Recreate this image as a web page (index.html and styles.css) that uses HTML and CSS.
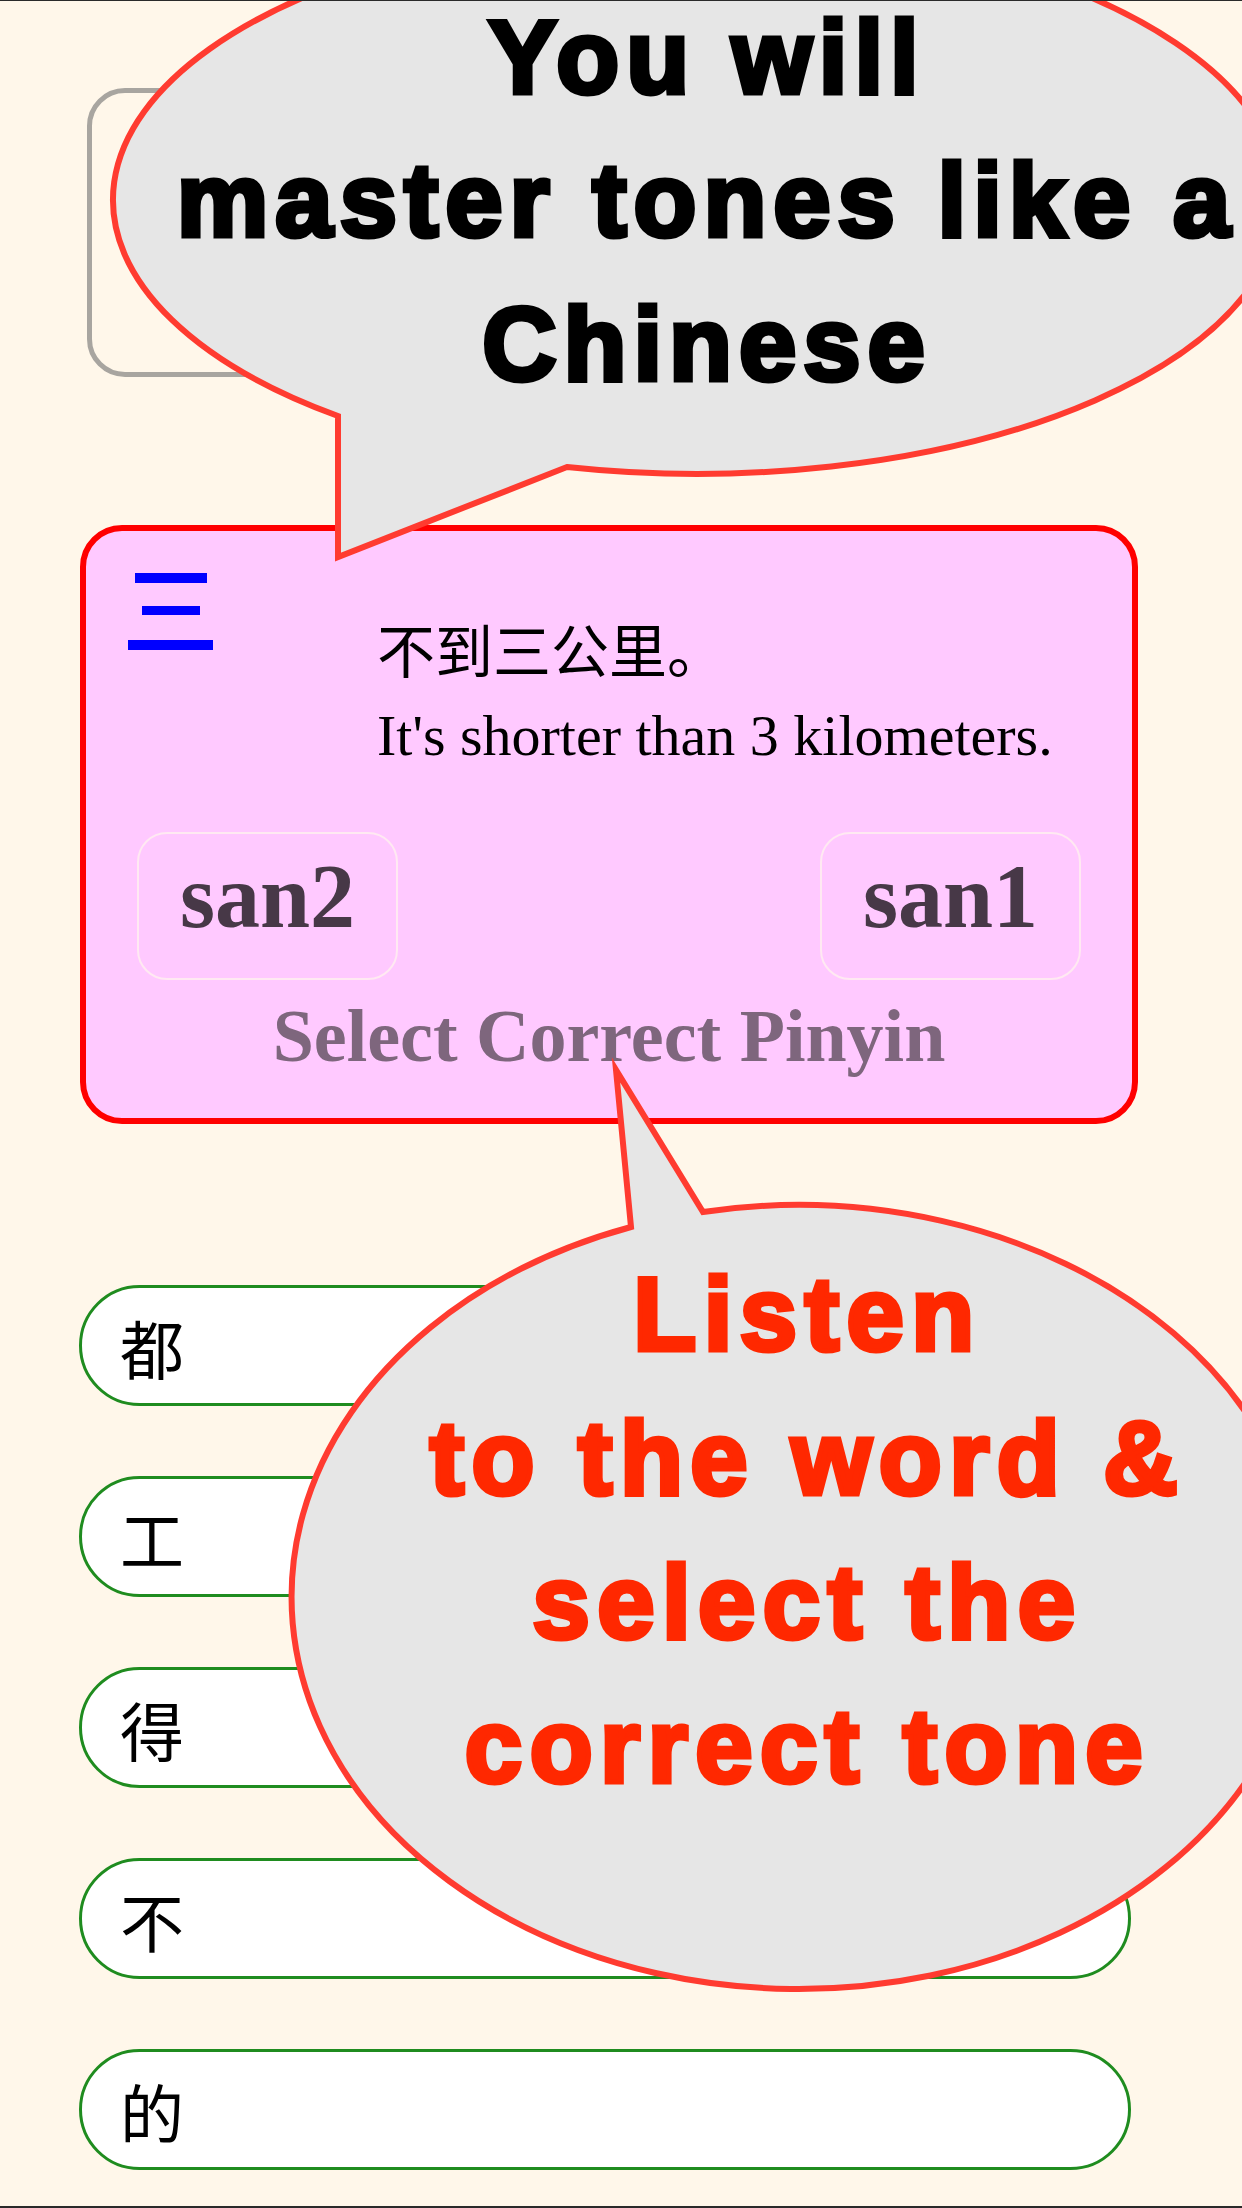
FILE: index.html
```html
<!DOCTYPE html>
<html lang="en">
<head>
<meta charset="utf-8">
<title>Tones</title>
<link rel="stylesheet" href="styles.css">
</head>
<body>
<div class="page">
  <div class="header-box"></div>

  <div class="card">
    <div class="card-top">
      <div class="menu" aria-label="menu"><span class="bar bar1"></span><span class="bar bar2"></span><span class="bar bar3"></span></div>
      <div class="sentence">
        <div class="zh">不到三公里。</div>
        <div class="en">It's shorter than 3 kilometers.</div>
      </div>
    </div>
    <div class="choices">
      <div class="choice">san2</div>
      <div class="choice">san1</div>
    </div>
    <div class="prompt">Select Correct Pinyin</div>
  </div>

  <div class="list">
    <div class="row">都</div>
    <div class="row">工</div>
    <div class="row">得</div>
    <div class="row">不</div>
    <div class="row">的</div>
  </div>

  <svg class="overlay" width="1242" height="2208" viewBox="0 0 1242 2208" aria-hidden="true">
    <path class="bubble b1" d="M 338 416 L 338 557 L 567 467 A 584 274 0 1 0 338 416 Z"/>
    <path class="bubble b2" d="M 631 1227 L 616 1070 L 703 1212 A 507 392 0 1 1 631 1227 Z"/>
  </svg>
  <div class="bubble-text t1">
    <span class="line first">You will</span>
    <span class="line">master tones like a</span>
    <span class="line">Chinese</span>
  </div>
  <div class="bubble-text t2">
    <span class="line">Listen</span>
    <span class="line">to the word &amp;</span>
    <span class="line">select the</span>
    <span class="line">correct tone</span>
  </div>
</div>
</body>
</html>
```

FILE: styles.css
```css
html, body {
  margin: 0;
  padding: 0;
  background: #fff7ea;
}

.page {
  position: relative;
  width: 1242px;
  height: 2208px;
  box-sizing: border-box;
  border-top: 1px solid #2a2a2a;
  border-bottom: 2px solid #2a2a2a;
  background: #fff7ea;
  overflow: hidden;
  padding-top: 87px;
}

.header-box {
  margin-left: 87px;
  width: 1044px;
  height: 289px;
  box-sizing: border-box;
  border: 5px solid #a8a5a0;
  border-radius: 38px;
}

.card {
  margin-top: 148px;
  margin-left: 80px;
  width: 1058px;
  height: 599px;
  box-sizing: border-box;
  border: 6px solid #ff0000;
  border-radius: 42px;
  background: #ffc9ff;
  padding: 42px 51px 0 51px;
  display: flex;
  flex-direction: column;
}

.card-top {
  display: flex;
  align-items: flex-start;
}

.menu {
  margin-left: -9px;
  width: 85px;
  display: flex;
  flex-direction: column;
  align-items: center;
}

.bar {
  display: block;
  height: 10px;
  background: #0000ff;
}
.bar1 { width: 72px; }
.bar2 { width: 58px; height: 9px; margin-top: 23px; }
.bar3 { width: 85px; margin-top: 25px; }

.sentence {
  margin-left: 164px;
  margin-top: 40px;
}

.zh {
  font-family: "Noto Sans CJK SC", "Noto Sans", sans-serif;
  font-size: 58px;
  line-height: 70px;
  color: #000;
}

.en {
  margin-top: 18px;
  font-family: "Liberation Serif", "Times New Roman", serif;
  font-size: 58px;
  line-height: 70px;
  color: #000;
  white-space: nowrap;
}

.choices {
  margin-top: 61px;
  display: flex;
  justify-content: space-between;
}

.choice {
  width: 261px;
  height: 148px;
  box-sizing: border-box;
  border: 2px solid #ffe9f2;
  border-radius: 30px;
  display: flex;
  align-items: center;
  justify-content: center;
  padding-bottom: 20px;
  font-family: "Liberation Serif", "Times New Roman", serif;
  font-weight: 700;
  font-size: 90px;
  color: #473847;
}

.prompt {
  margin-top: 14px;
  text-align: center;
  font-family: "Liberation Serif", "Times New Roman", serif;
  font-weight: 700;
  font-size: 74px;
  line-height: 85px;
  color: #7e667d;
  margin-left: -51px;
  margin-right: -51px;
}

.list {
  margin-top: 161px;
  margin-left: 79px;
  width: 1052px;
  display: flex;
  flex-direction: column;
  gap: 70px;
}

.row {
  height: 121px;
  box-sizing: border-box;
  border: 3px solid #1f8c1f;
  border-radius: 61px;
  background: #ffffff;
  display: flex;
  align-items: center;
  padding-left: 38px;
  font-family: "Noto Sans CJK SC", "Noto Sans", sans-serif;
  font-size: 64px;
  color: #000;
}

.overlay {
  position: absolute;
  left: 0;
  top: -1px;
  pointer-events: none;
}

.bubble {
  fill: #e6e6e6;
  stroke: #ff3b30;
  stroke-linejoin: miter;
  stroke-miterlimit: 20;
}
.b1 { stroke-width: 6; }
.b2 { stroke-width: 6; }

.bubble-text {
  position: absolute;
  text-align: center;
  white-space: nowrap;
  font-family: "Liberation Sans", Arial, sans-serif;
  font-weight: 700;
  font-size: 103px;
  -webkit-text-stroke: 5px currentColor;
}

.line {
  display: block;
  height: 144px;
  line-height: 144px;
}

.t1 {
  left: 100px;
  width: 1200px;
  top: 0;
  color: #000000;
  letter-spacing: 7px;
  padding-left: 7px;
}

.t1 .line.first {
  height: 128px;
  line-height: 113px;
}

.t2 {
  left: 300px;
  width: 1000px;
  top: 1242px;
  color: #ff2800;
  letter-spacing: 7.5px;
  padding-left: 7.5px;
}
```
